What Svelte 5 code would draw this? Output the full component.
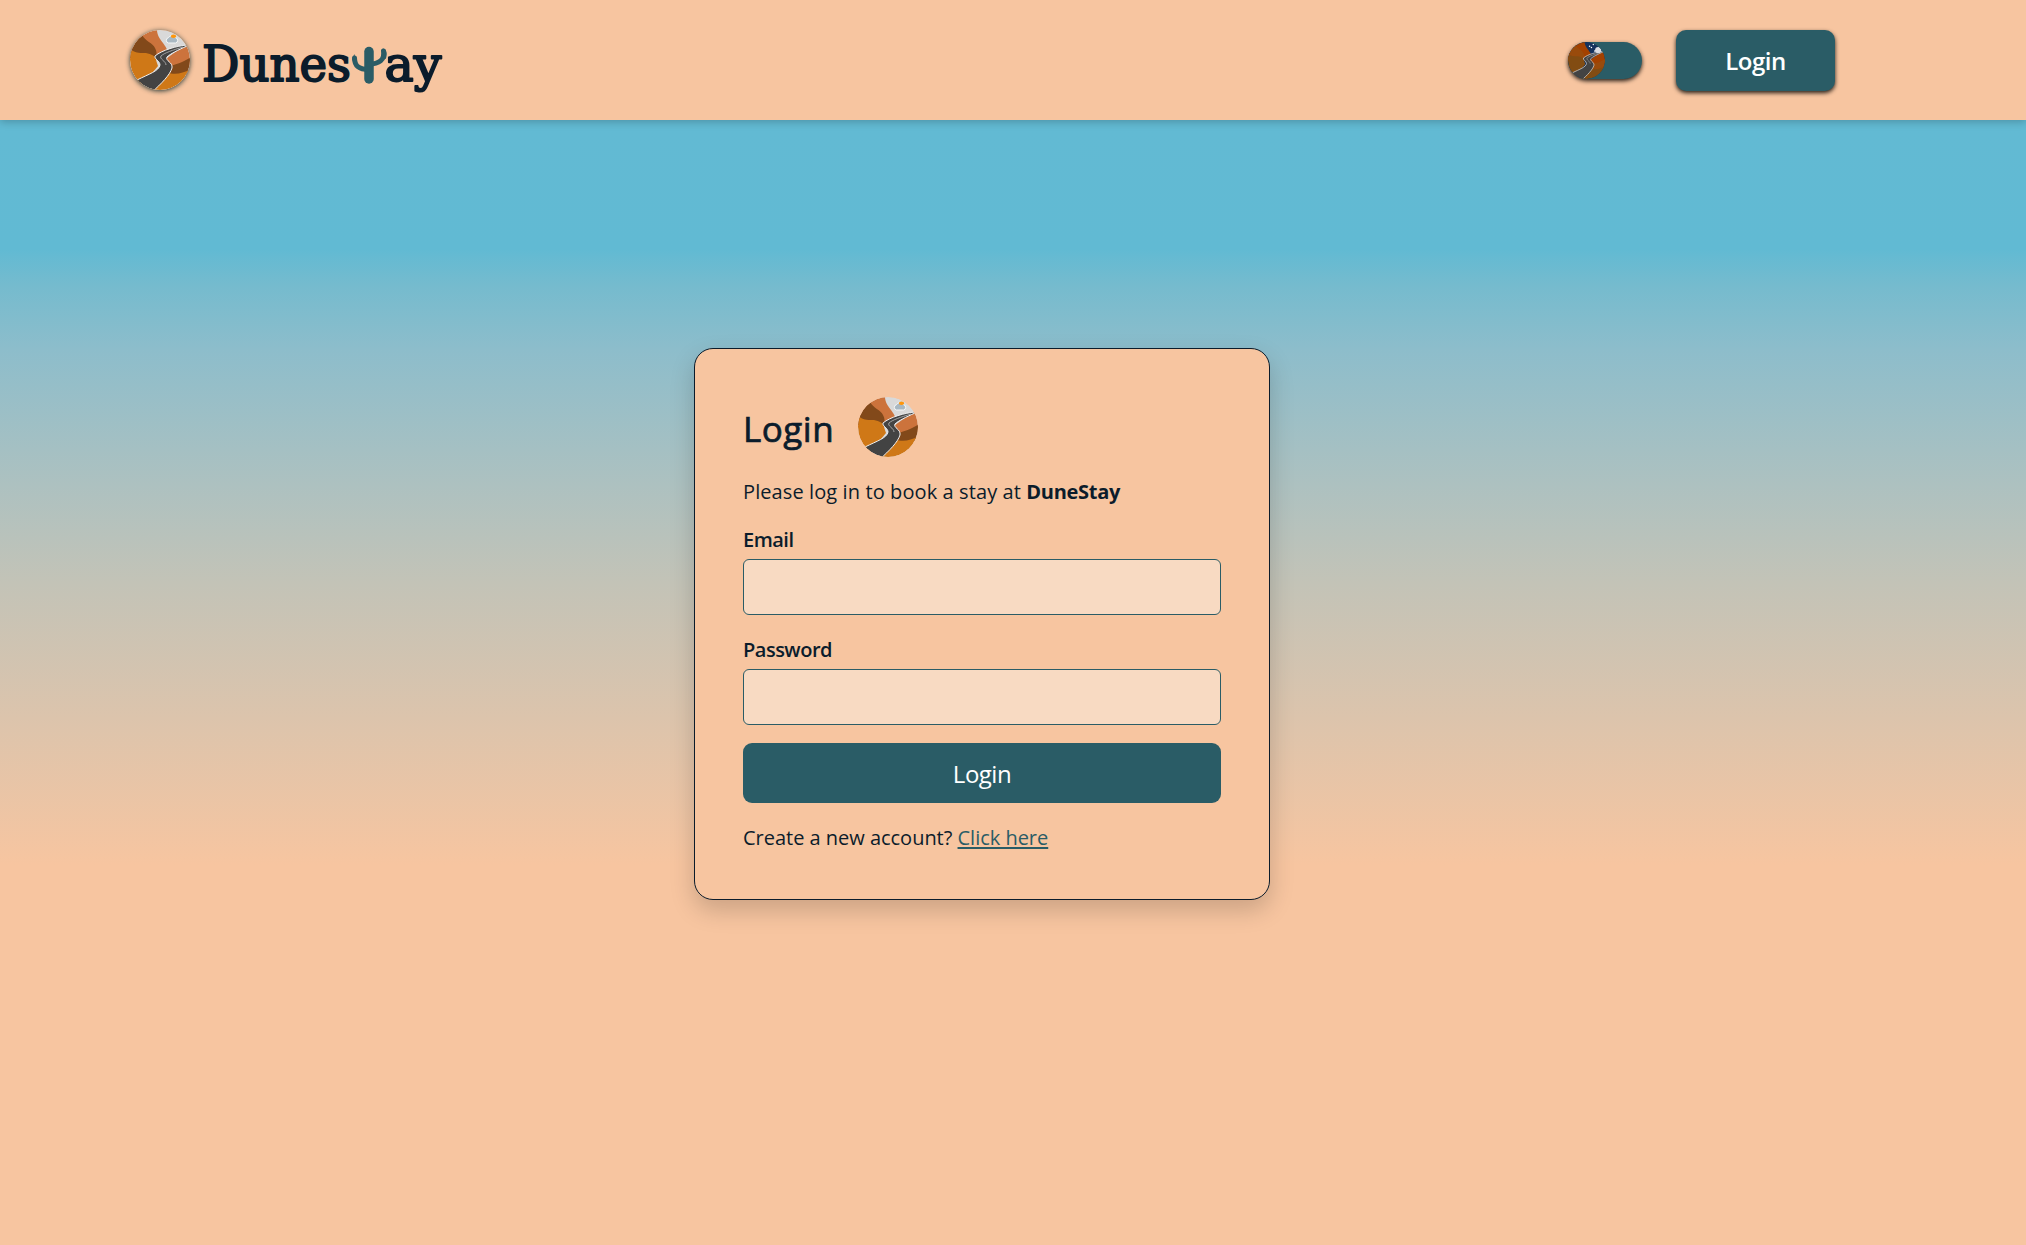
<script lang="ts">
  let email = $state('');
  let password = $state('');
</script>

{#snippet emblem(kind)}
  <svg class="emblem {kind}" viewBox="0 0 60 60" aria-hidden="true">
    <clipPath id="disc-{kind}"><circle cx="30" cy="30" r="30" /></clipPath>
    <g clip-path="url(#disc-{kind})">
      <rect class="sky" width="60" height="60" />
      <path class="ridge" d="M0 0H27C27 5 30 9 33 13C36 17 37 19 37 20L22 34L0 30Z" />
      <path class="shade" d="M0 5H12C15 11 23 13 25 18C27 22 27 24 25 30L0 28Z" />
      <path class="sand" d="M0 19C5 23 9 23 14 23C19 23 25 25 26 30L28 36L8 60H0Z" />
      <path class="ridge" d="M36 29C42 24 50 18 60 15V35L40 40Z" />
      <path class="shade" d="M40 36C46 34 52 33 61 27V44H38Z" />
      <path class="sand" d="M37 42C45 46 54 43 62 38V62H20Z" />
      <path class="road" d="M57 15C47 16 32 20 25 26C24 29 30 31 30 35C29 41 19 44 7 50L14 62H22C31 54 40 45 42 38C43 32 35 31 37 27C40 24 48 20 57 16Z" />
      <path class="line" d="M53 17C43 20 34 23 31 26C29 29 36 31 36 35" />
      {#if kind === 'night'}
        <circle class="moon" cx="49" cy="13" r="5" />
        <path class="moon" d="M42 16q0-4 4-4l8 4z" />
        <circle class="star" cx="35" cy="7" r="1.2" />
        <circle class="star" cx="41" cy="4" r="1.1" />
        <circle class="star" cx="38" cy="9" r="1.2" />
      {:else}
        <path class="cloud" d="M38.500 13a2.700 2.700 0 0 1 0-5.300a4 4 0 0 1 7 0a2.700 2.700 0 0 1 0 5.300Z" />
        <ellipse class="sun" cx="43.500" cy="6.200" rx="2.700" ry="1.700" />
      {/if}
    </g>
  </svg>
{/snippet}

<div class="page">
  <header>
    <div class="bar">
      <a class="brand" href="#home" aria-label="Dunestay">
        {@render emblem('logo')}
        <svg class="wordmark" viewBox="0 0 240 60">
          <text x="-2" y="50.500" textLength="149" lengthAdjust="spacingAndGlyphs">Dunes</text>
          <path class="trunk" d="M165 21.500V49" />
          <path class="arm" d="M150.500 28C150.500 37 156 39.500 165 39.500M165 34C175 34 181 30 179.500 21" />
          <path class="tip" d="M150.300 24L148 30L152.900 33ZM179.500 18.500C183 20 183.500 24 181.800 29L177 26Z" />
          <text x="180.500" y="50.500" textLength="57" lengthAdjust="spacingAndGlyphs">ay</text>
        </svg>
      </a>
      <div class="actions">
        <button class="toggle" aria-label="Toggle theme">{@render emblem('night')}</button>
        <button class="signin">Login</button>
      </div>
    </div>
  </header>

  <main>
    <form class="card">
      <div class="title">
        <h1>Login</h1>
        {@render emblem('day')}
      </div>
      <p class="intro">Please log in to book a stay at <strong>DuneStay</strong></p>
      <label for="email">Email</label>
      <input id="email" type="email" bind:value={email} />
      <label for="password">Password</label>
      <input id="password" type="password" bind:value={password} />
      <button class="submit" type="button">Login</button>
      <p class="signup">Create a new account? <a href="#register">Click here</a></p>
    </form>
  </main>
</div>

<style>
  :global(body) { margin: 0; background: #f7c5a0; }
  .page {
    min-height: 1245px;
    color: #0b1c2b;
    font: 20px/30px 'Open Sans', 'Noto Sans', sans-serif;
    background: linear-gradient(#63bad3 0, #61bad3 249px, #75bbce 285px, #8dbdcb 350px, #adc1c0 485px, #c3c3b7 583px, #f7c5a0 865px);
  }
  header {
    position: relative;
    height: 120px;
    background: #f7c5a0;
    box-shadow: 0 2px 8px rgba(0, 0, 0, .22);
  }
  .bar {
    box-sizing: border-box;
    width: 1964px;
    height: 120px;
    padding: 0 129px 0 130px;
    display: flex;
    align-items: center;
    justify-content: space-between;
  }
  .brand { display: flex; align-items: center; gap: 14px; }
  .emblem { display: block; width: 60px; height: 60px; border-radius: 50%; flex: none; }
  .logo { box-shadow: 0 1px 5px rgba(11, 40, 43, .9); }
  .wordmark { width: 240px; height: 60px; overflow: visible; }
  .wordmark text {
    font: 48px 'DejaVu Serif', serif;
    fill: #0b1c2b;
    stroke: #0b1c2b;
    stroke-width: 1.9px;
    stroke-linejoin: round;
  }
  .trunk, .arm { fill: none; stroke: #2a5c66; stroke-linecap: round; }
  .trunk { stroke-width: 9.5px; }
  .arm { stroke-width: 5px; }
  .tip { fill: #2a5c66; }

  .sky { fill: #d9d9d9; }
  .ridge { fill: #cc733c; }
  .shade { fill: #82491a; }
  .sand { fill: #cf7817; }
  .road { fill: #434343; stroke: #eee; stroke-width: 1; }
  .line { fill: none; stroke: #bbb; stroke-width: .8; }
  .sun { fill: #ff960c; }
  .cloud { fill: #a9b8c2; stroke: #f4f6f7; stroke-width: 1; }
  .moon { fill: #d9dbe0; }
  .star { fill: #fff; }
  .night { width: 37px; height: 37px; }
  .night .sky { fill: #14315c; }
  .night .ridge { fill: #a34100; }
  .night .shade { fill: #994b0c; }
  .night .sand { fill: #824c12; }

  .actions { display: flex; align-items: center; gap: 34px; }
  button { border: 0; padding: 0; background: #2a5c66; color: #fff; font-family: inherit; }
  .toggle {
    width: 74px;
    height: 37px;
    border-radius: 19px;
    box-shadow: 0 2px 4px rgba(0, 0, 0, .85);
  }
  .signin {
    width: 159px;
    height: 61px;
    border-radius: 10px;
    font-size: 24px;
    font-weight: 600;
    letter-spacing: -.5px;
    box-shadow: 0 2px 4px rgba(0, 0, 0, .85);
  }

  main { width: 1964px; padding-top: 228px; display: flex; justify-content: center; }
  .card {
    box-sizing: border-box;
    width: 576px;
    height: 552px;
    padding: 48px;
    display: flex;
    flex-direction: column;
    background: #f7c5a0;
    border: 1px solid #0b1c2b;
    border-radius: 19px;
    box-shadow: 0 10px 24px rgba(0, 0, 0, .18);
  }
  .card > * { flex-shrink: 0; }
  .title { display: flex; align-items: center; gap: 24px; height: 60px; }
  h1 {
    margin: 3px 0 0;
    font-size: 35px;
    line-height: 54px;
    font-weight: 400;
    letter-spacing: .5px;
    -webkit-text-stroke: .7px #0b1c2b;
  }
  p { margin: 0; white-space: nowrap; }
  .intro { margin-top: 20px; letter-spacing: .1px; }
  strong { font-weight: 700; letter-spacing: -.3px; }
  label { margin-top: 18px; height: 30px; margin-bottom: 4px; font-weight: 600; letter-spacing: -.5px; }
  input {
    box-sizing: border-box;
    width: 478px;
    height: 56px;
    margin: 0;
    padding: 0 16px;
    font: inherit;
    color: inherit;
    background: #f8dac2;
    border: 1px solid #2a5c66;
    border-radius: 6px;
  }
  input + label { margin-top: 20px; }
  .submit { height: 60px; margin-top: 18px; border-radius: 9px; font-size: 24px; letter-spacing: -.5px; }
  .signup { margin-top: 20px; letter-spacing: -.02px; }
  .signup a { color: #2a5c66; text-decoration-thickness: 2px; text-underline-offset: 2px; }
</style>
